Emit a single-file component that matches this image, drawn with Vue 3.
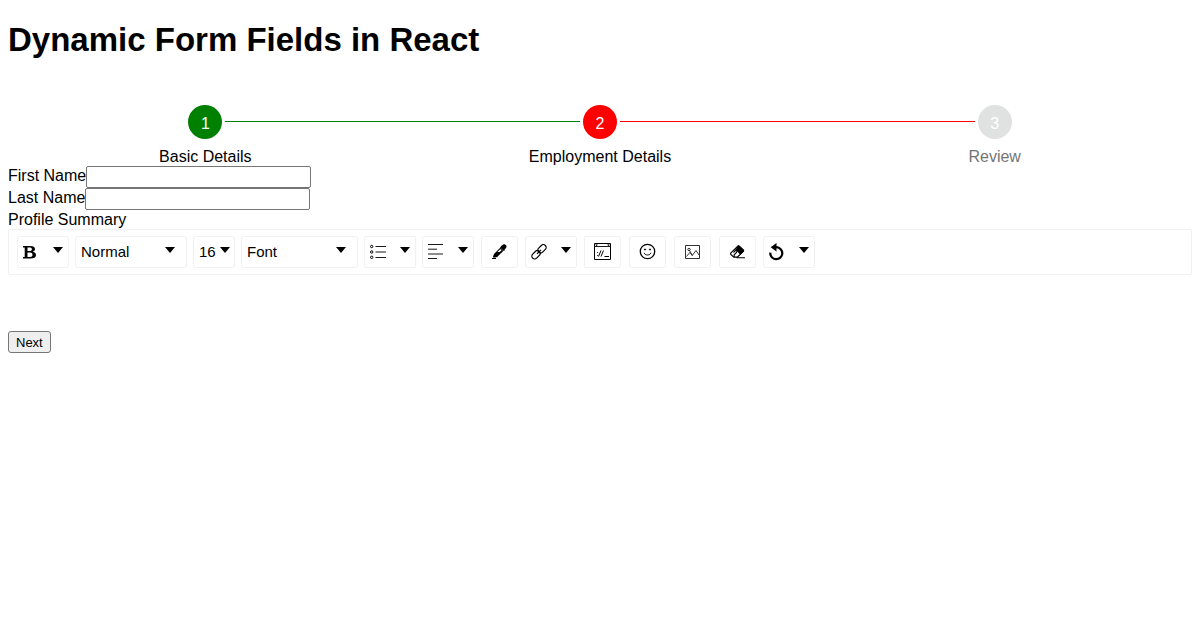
<script setup>
import { ref } from 'vue'

const steps = [
  { label: 'Basic Details', state: 'done' },
  { label: 'Employment Details', state: 'active' },
  { label: 'Review', state: 'pending' },
]
const firstName = ref('')
const lastName = ref('')
</script>

<template>
  <main class="page">
    <h1>Dynamic Form Fields in React</h1>

    <ol class="stepper">
      <li v-for="(step, i) in steps" :key="step.label" class="step" :class="step.state">
        <span class="dot">{{ i + 1 }}</span>
        <span class="step-label">{{ step.label }}</span>
      </li>
    </ol>

    <form @submit.prevent>
      <div class="field">
        <label for="first">First Name</label><input id="first" v-model="firstName" type="text">
      </div>
      <div class="field">
        <label for="last">Last Name</label><input id="last" v-model="lastName" type="text">
      </div>
      <div class="caption">Profile Summary</div>

      <div class="toolbar" role="toolbar" aria-label="Profile Summary">
        <button type="button" class="drop" aria-label="Inline style">
          <svg width="13" height="14" viewBox="0 0 13 14"><path fill-rule="evenodd" d="M0 1h7.400C10.300 1 12 2 12 4c0 1.400-.9 2.300-2.300 2.800C11.700 7.200 13 8.200 13 10c0 2.400-1.900 3.500-5.300 3.500H0V12h1.700V2.500H0zM4.500 2.500V6h2.100c1.500 0 2.300-.6 2.300-1.800S8.100 2.500 6.600 2.500zM4.500 7.500V12h2.400c1.700 0 2.600-.7 2.600-2.200s-.9-2.300-2.600-2.300z"/></svg>
          <span class="caret"></span>
        </button>
        <button type="button" class="drop block">Normal<span class="caret"></span></button>
        <button type="button" class="drop size">16<span class="caret"></span></button>
        <button type="button" class="drop font">Font<span class="caret"></span></button>
        <button type="button" class="drop" aria-label="List">
          <svg width="16" height="16" viewBox="0 0 16 16" fill="none" stroke="#000"><circle cx="1.700" cy="2.500" r="1.200"/><circle cx="1.700" cy="8" r="1.200"/><circle cx="1.700" cy="13.300" r="1.200"/><path stroke-width=".9" d="M5.500 2.500H16M5.500 8H16M5.500 13.500H16"/></svg>
          <span class="caret"></span>
        </button>
        <button type="button" class="drop" aria-label="Text align">
          <svg width="15" height="16" viewBox="0 0 15 16" fill="none" stroke="#000" stroke-width=".9"><path d="M0 .5h15M0 5.200h9M0 10h15M0 14.500h9"/></svg>
          <span class="caret"></span>
        </button>
        <button type="button" class="single" aria-label="Color">
          <svg width="15" height="16" viewBox="0 0 15 16"><path d="M9.500 1.700 11.200.5c1.400-1 3.700.4 3.300 2.400-.2.900-1.200 1.700-1.900 2.500l.2.900-1 .7-3.700-3.600.7-1zM8.200 3.800l3.100 3.100-6.100 6-3.400.9L.9 13l1.100-3zM8.200 5.200 5.400 8h2.300l2-2z M0 14h4v1H0z" fill-rule="evenodd"/></svg>
          </button>
        <button type="button" class="drop" aria-label="Link">
          <svg width="16" height="16" viewBox="0 0 16 16" fill="none" stroke="#000" stroke-width="1.200"><rect x="6.300" y="2" width="9.400" height="5.600" rx="2.800" transform="rotate(-45 11 4.800)"/><rect x=".3" y="8" width="9.400" height="5.600" rx="2.800" transform="rotate(-45 5 10.800)"/><path d="m6 9.800 4-4"/></svg>
          <span class="caret"></span>
        </button>
        <button type="button" class="single" aria-label="Embed">
          <svg width="17" height="18" viewBox="0 0 17 18" fill="none" stroke="#000"><path d="M.5.500h16v16H.5z"/><path d="M1 3.500h15" stroke-width=".9"/><path d="M2 0h1v2.500H2zM14 0h1v2.500h-1z" stroke-width=".7"/><path d="M4.500 13.500 7 7.500M7 13.500l2.500-6M10.500 13.500H15"/><path d="M3.500 9v1M3.500 12v1" stroke-width=".8"/></svg>
        </button>
        <button type="button" class="single" aria-label="Emoji">
          <svg width="17" height="18" viewBox="0 0 17 18" fill="none" stroke="#000"><circle cx="8.500" cy="8.500" r="7.200" stroke-width="1.300"/><path d="M5 9.800c.8 2.900 6.200 2.900 7 0"/><circle cx="6" cy="6.500" r=".6" fill="#000"/><circle cx="11" cy="6.500" r=".6" fill="#000"/></svg>
        </button>
        <button type="button" class="single" aria-label="Image">
          <svg width="15" height="14" viewBox="0 0 15 14" fill="none" stroke="#000" stroke-width=".8"><path d="M.5.500h14v13H.5z"/><circle cx="4" cy="4.500" r="1.200"/><path d="m1.500 11.500 3.300-4 1.500 1.500 1 1.500L11 5.500l3 4.500M4.500 5.500 7.300 10.500"/></svg>
        </button>
        <button type="button" class="single" aria-label="Remove formatting">
          <svg width="15" height="14" viewBox="0 0 15 14"><path fill="none" stroke="#000" stroke-width="1.200" stroke-linejoin="round" d="M.7 8.200 7.800 1.100c.5-.5 1-.5 1.500 0l4 3.800c.4.5.4 1 0 1.500l-6 5.800H4L.7 9.400z"/><path d="M7.700 1h1.800l4.200 4v1.500l-3.300 3.200-3.200-3.100-.6-3.200z"/><path fill="none" stroke="#000" stroke-width="1.100" d="M3.500 7.500 6.800 4v3L4.200 9.800v2.400M6.500 12.700H15"/></svg>
        </button>
        <button type="button" class="drop" aria-label="Undo">
          <svg width="15" height="18" viewBox="0 0 15 18"><path fill="none" stroke="#000" stroke-width="2.200" d="M6 4.200h1.500a6 6 0 1 1-6.200 5.500"/><path d="M7.500 0v8.500L1.700 4.200z"/></svg>
          <span class="caret"></span>
        </button>
      </div>

      <div class="editor" contenteditable="true" role="textbox" aria-label="Profile Summary"></div>
      <button type="submit" class="next">Next</button>
    </form>
  </main>
</template>

<style>
body { margin: 0; background: #fff; }
</style>

<style scoped>
.page {
  padding: 8px;
  font: 16px/18px Helvetica, "Liberation Sans", Arial, sans-serif;
  color: #000;
}
h1 { margin: 12px 0 45px; font-size: 33px; line-height: 40px; }
.stepper { display: flex; margin: 0; padding: 0; list-style: none; }
.step {
  position: relative;
  flex: 1;
  display: flex;
  flex-direction: column;
  align-items: center;
  gap: 9px;
}
.dot {
  width: 34px;
  height: 34px;
  border-radius: 50%;
  background: #e0e2e1;
  color: #fff;
  line-height: 37px;
  text-align: center;
}
.done .dot { background: green; }
.active .dot { background: red; }
.step:not(:last-child)::after {
  content: "";
  position: absolute;
  top: 16px;
  left: calc(50% + 20px);
  right: calc(-50% + 20px);
  height: 1px;
  background: green;
}
.step.active::after { background: red; }
.pending .step-label { color: #757575; }
.field { display: flex; height: 22px; }
.field label { line-height: 20px; }
.field input {
  box-sizing: border-box;
  width: 225px;
  height: 22px;
  margin: 0;
  padding: 1px 2px;
  border: 1px solid #767676;
  border-radius: 2px;
  font: 16px "Liberation Sans", sans-serif;
}
.caption { line-height: 19px; }
.toolbar {
  display: flex;
  flex-wrap: wrap;
  padding: 6px 5px;
  border: 1px solid #f1f1f1;
  border-radius: 2px;
}
.toolbar button {
  box-sizing: border-box;
  display: flex;
  align-items: center;
  height: 32px;
  border: 1px solid #f1f1f1;
  border-radius: 2px;
  background: #fff;
  color: #000;
  font: inherit;
  font-size: 15px;
}
.toolbar .drop {
  justify-content: space-between;
  width: 52px;
  margin: 0 3px;
  padding: 0 5px;
}
.toolbar .single {
  justify-content: center;
  width: 37px;
  margin: 0 4px;
  padding: 0;
}
.toolbar .block { width: 112px; padding-right: 11px; }
.toolbar .size { width: 42px; padding-right: 4px; }
.toolbar .font { width: 117px; padding-right: 11px; }
.caret {
  margin-bottom: 4px;
  border: 5px solid transparent;
  border-top: 6px solid #000;
  border-bottom: 0;
}
.editor { min-height: 56px; outline: 0; }
.next {
  display: block;
  height: 22px;
  padding: 0 7px;
  border: 1px solid #767676;
  border-radius: 3px;
  background: #efefef;
  color: #000;
  font: 13px Helvetica, "Liberation Sans", sans-serif;
}
</style>
